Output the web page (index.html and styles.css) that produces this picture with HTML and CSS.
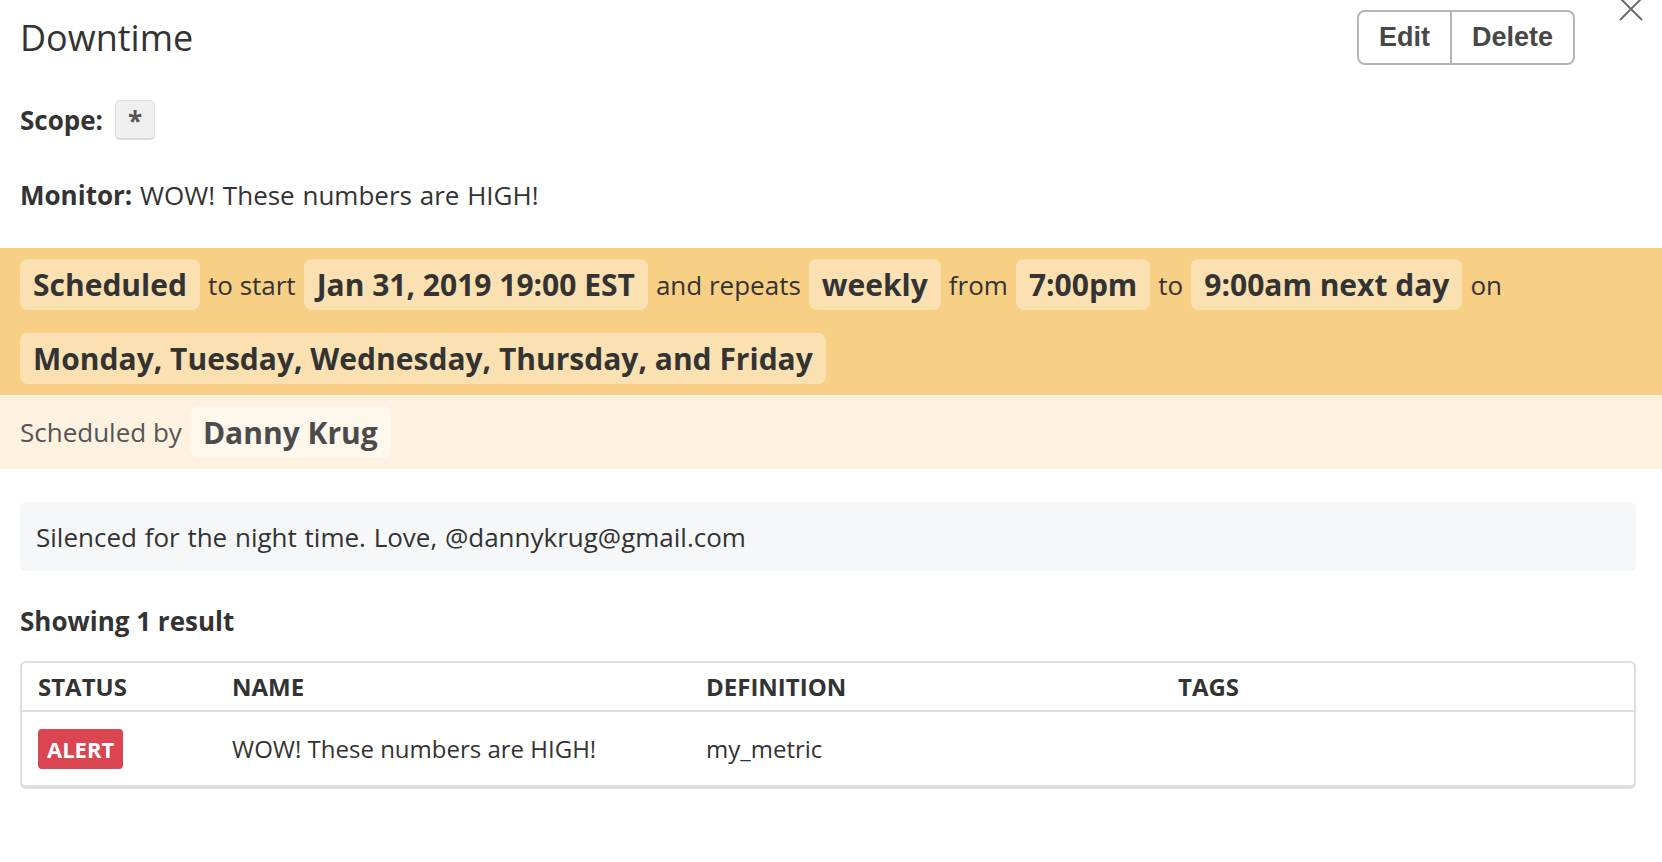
FILE: index.html
```html
<!DOCTYPE html>
<html lang="en">
<head>
<meta charset="utf-8">
<title>Downtime</title>
<link rel="stylesheet" href="styles.css">
</head>
<body>
<div class="page">
  <header class="header">
    <h1 class="title">Downtime</h1>
    <div class="btn-group">
      <button class="btn">Edit</button>
      <button class="btn btn-last">Delete</button>
    </div>
    <svg class="close" width="24" height="24" viewBox="0 0 24 24" aria-hidden="true">
      <path d="M1 1 L23 23 M23 1 L1 23" stroke="#6b6b6b" stroke-width="2" fill="none"/>
    </svg>
  </header>

  <div class="scope-row">
    <span class="label">Scope:</span>
    <span class="scope-badge">*</span>
  </div>

  <div class="monitor-row"><span class="label">Monitor:</span> WOW! These numbers are HIGH!</div>

  <section class="schedule">
    <span class="chip">Scheduled</span>
    <span class="txt">to start</span>
    <span class="chip">Jan 31, 2019 19:00 EST</span>
    <span class="txt">and repeats</span>
    <span class="chip">weekly</span>
    <span class="txt">from</span>
    <span class="chip">7:00pm</span>
    <span class="txt">to</span>
    <span class="chip">9:00am next day</span>
    <span class="txt">on</span>
    <span class="chip">Monday, Tuesday, Wednesday, Thursday, and Friday</span>
  </section>

  <section class="byline">
    <span class="txt by">Scheduled by</span>
    <span class="chip chip-light">Danny Krug</span>
  </section>

  <div class="note">Silenced for the night time. Love, @dannykrug@gmail.com</div>

  <div class="results">Showing 1 result</div>

  <div class="table">
    <div class="trow thead">
      <div class="cell">STATUS</div>
      <div class="cell">NAME</div>
      <div class="cell">DEFINITION</div>
      <div class="cell">TAGS</div>
    </div>
    <div class="trow tbody">
      <div class="cell"><span class="alert">ALERT</span></div>
      <div class="cell">WOW! These numbers are HIGH!</div>
      <div class="cell">my_metric</div>
      <div class="cell"></div>
    </div>
  </div>
</div>
</body>
</html>
```

FILE: styles.css
```css
* { box-sizing: border-box; }

html, body {
  margin: 0;
  padding: 0;
  background: #ffffff;
}

body {
  font-family: "Open Sans", "Noto Sans", "DejaVu Sans", sans-serif;
  font-size: 26px;
  color: #333333;
  overflow: hidden;
}

.page {
  width: 1662px;
  height: 862px;
  position: relative;
}

.header {
  position: relative;
  display: flex;
  justify-content: space-between;
  align-items: center;
  padding: 10px 87px 0 20px;
}

.title {
  margin: 0;
  font-size: 36px;
  font-weight: 400;
  line-height: 50px;
  color: #333333;
}

.btn-group {
  display: flex;
  height: 55px;
}

.btn {
  font-family: "Liberation Sans", Arial, sans-serif;
  font-weight: 700;
  font-size: 27px;
  color: #474747;
  background: #ffffff;
  border: 2px solid #b5b5b5;
  border-radius: 8px 0 0 8px;
  padding: 0 20px;
  height: 55px;
  margin: 0;
}

.btn-last {
  border-left: none;
  border-radius: 0 8px 8px 0;
  padding: 0 20px 0 20px;
}

.close {
  position: absolute;
  top: -3px;
  right: 19px;
}

.scope-row {
  display: flex;
  align-items: center;
  gap: 12px;
  margin-top: 35px;
  padding: 0 20px;
  height: 40px;
}

.label {
  font-weight: 700;
}

.scope-badge {
  display: flex;
  align-items: center;
  justify-content: center;
  width: 40px;
  height: 40px;
  background: #efefef;
  border: 1px solid #dedede;
  border-bottom: 2px solid #d8d8d8;
  border-radius: 5px;
  color: #555555;
  font-weight: 700;
  font-size: 26px;
  padding-top: 2px;
}

.monitor-row {
  margin-top: 37px;
  padding: 0 20px;
  line-height: 36px;
  word-spacing: 1px;
}

.schedule {
  margin-top: 35px;
  background: #f8d085;
  padding: 11px 20px 11px 20px;
  display: flex;
  flex-wrap: wrap;
  align-items: center;
  column-gap: 8px;
  row-gap: 23px;
}

.chip {
  display: inline-flex;
  align-items: center;
  height: 51px;
  padding: 0 13px;
  background: #fbe1b2;
  border-radius: 8px;
  font-weight: 700;
  font-size: 30px;
  color: #333333;
}

.txt {
  font-size: 26px;
  color: #333333;
}

.byline {
  background: #fdf1df;
  padding: 11px 20px 11px 20px;
  display: flex;
  align-items: center;
  gap: 8px;
}

.by {
  color: #555555;
}

.chip-light {
  background: #fef7ec;
  color: #4b4b4b;
  height: 52px;
}

.note {
  margin: 33px 26px 0 20px;
  height: 69px;
  background: #f6f7f9;
  border-radius: 6px;
  display: flex;
  align-items: center;
  padding: 0 16px;
  color: #333333;
  word-spacing: 1px;
}

.results {
  margin-top: 32px;
  padding: 0 20px;
  font-weight: 700;
  line-height: 36px;
}

.table {
  margin: 22px 26px 0 20px;
  border: 2px solid #dedee2;
  border-bottom-width: 4px;
  border-radius: 6px;
}

.trow {
  display: grid;
  grid-template-columns: 194px 474px 472px 1fr;
  align-items: center;
}

.thead {
  height: 49px;
  border-bottom: 2px solid #dedee2;
  font-weight: 700;
  font-size: 24px;
  color: #333333;
}

.tbody {
  height: 73px;
  font-size: 24px;
  color: #333333;
}

.cell {
  padding-left: 16px;
}

.alert {
  display: inline-flex;
  align-items: center;
  height: 40px;
  padding: 0 9px;
  background: #db4551;
  border-radius: 4px;
  color: #ffffff;
  font-weight: 700;
  font-size: 22px;
}
```
